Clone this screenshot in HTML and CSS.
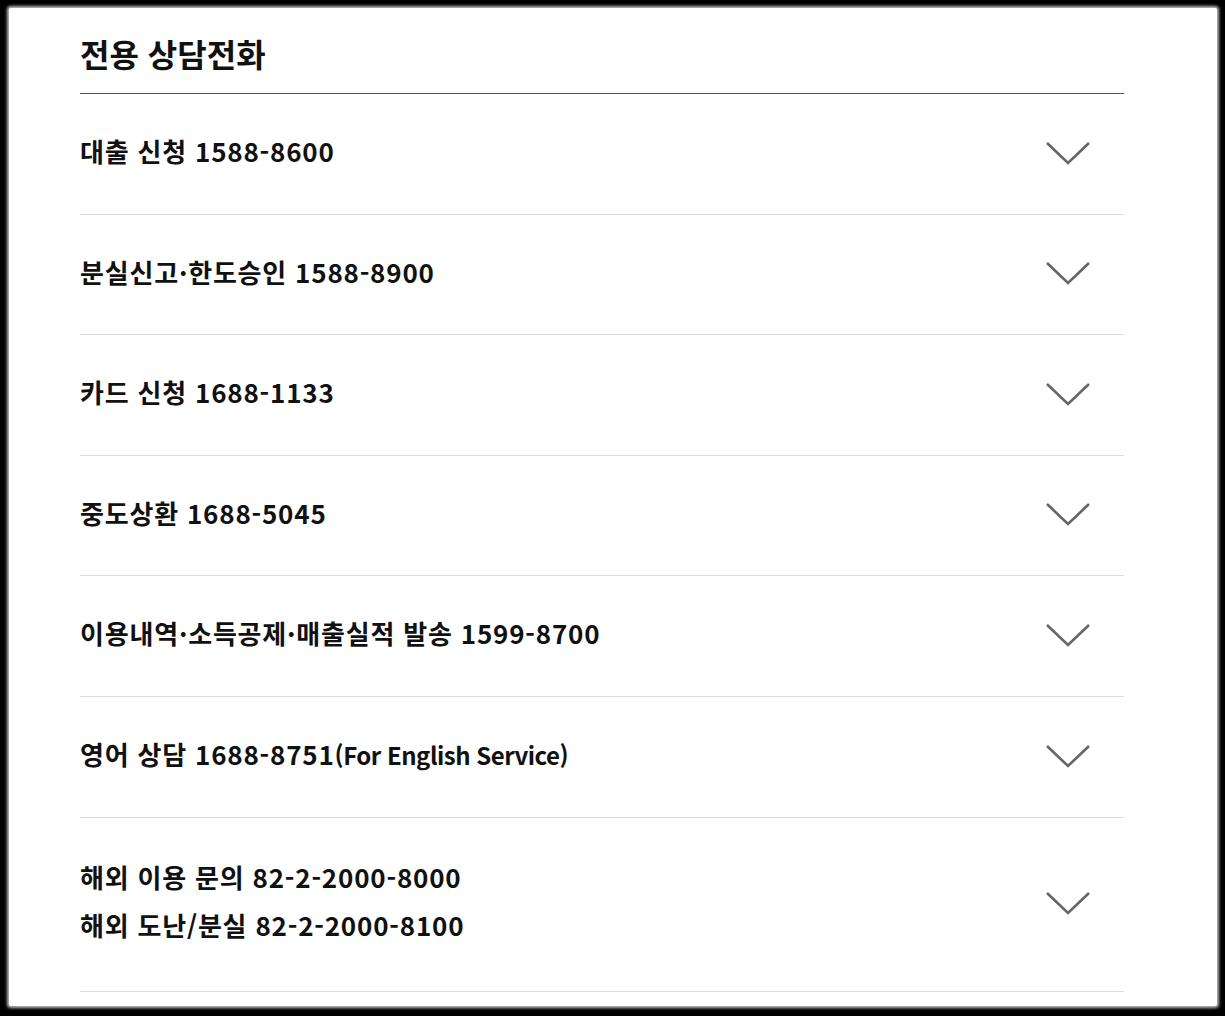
FILE: index.html
```html
<!DOCTYPE html>
<html lang="ko">
<head>
<meta charset="utf-8">
<title>전용 상담전화</title>
<link rel="stylesheet" href="styles.css">
</head>
<body>
<div class="panel">
  <section class="contact">
    <h2 class="title">전용 상담전화</h2>
    <ul class="list">
      <li class="row"><div class="label"><p>대출 신청 1588-8600</p></div><svg class="chev" viewBox="0 0 46 26"><path d="M2 2 L23 22 L44 2"/></svg></li>
      <li class="row"><div class="label"><p>분실신고·한도승인 1588-8900</p></div><svg class="chev" viewBox="0 0 46 26"><path d="M2 2 L23 22 L44 2"/></svg></li>
      <li class="row"><div class="label"><p>카드 신청 1688-1133</p></div><svg class="chev" viewBox="0 0 46 26"><path d="M2 2 L23 22 L44 2"/></svg></li>
      <li class="row"><div class="label"><p>중도상환 1688-5045</p></div><svg class="chev" viewBox="0 0 46 26"><path d="M2 2 L23 22 L44 2"/></svg></li>
      <li class="row"><div class="label"><p>이용내역·소득공제·매출실적 발송 1599-8700</p></div><svg class="chev" viewBox="0 0 46 26"><path d="M2 2 L23 22 L44 2"/></svg></li>
      <li class="row"><div class="label"><p>영어 상담 1688-8751<span class="en">(For English Service)</span></p></div><svg class="chev" viewBox="0 0 46 26"><path d="M2 2 L23 22 L44 2"/></svg></li>
      <li class="row row-last"><div class="label"><p>해외 이용 문의 82-2-2000-8000</p><p>해외 도난/분실 82-2-2000-8100</p></div><svg class="chev" viewBox="0 0 46 26"><path d="M2 2 L23 22 L44 2"/></svg></li>
    </ul>
  </section>
</div>
</body>
</html>
```
FILE: styles.css
```css
html, body {
  margin: 0;
  padding: 0;
  background: #000;
}
body {
  width: 1225px;
  height: 1016px;
  overflow: hidden;
  font-family: "Noto Sans CJK KR", "Noto Sans", sans-serif;
  color: #111;
}
.panel {
  margin: 8px 8px 0 9px;
  height: 998px;
  background: #fff;
  box-shadow: 0 0 3px 2px #bbb;
  border-radius: 2px;
}
.contact {
  margin-left: 71px;
  width: 1044px;
  padding-top: 22px;
}
.title {
  margin: 0;
  font-size: 32px;
  font-weight: 700;
  line-height: 46px;
  padding-bottom: 17px;
  border-bottom: 1px solid #555;
  letter-spacing: 0;
}
.list {
  list-style: none;
  margin: 0;
  padding: 0;
}
.row {
  display: flex;
  align-items: center;
  justify-content: space-between;
  padding: 36px 0;
  border-bottom: 1px solid #ddd;
}
.row-last {
  padding: 38px 0 39px;
}
.label {
  margin: -3px 0 3px;
}
.label p {
  margin: 0;
  font-size: 26px;
  font-weight: 700;
  line-height: 47.5px;
  letter-spacing: 0.8px;
}
.label .en {
  font-size: 24px;
  letter-spacing: -0.5px;
}
.row-last .label p {
  line-height: 48px;
}
.chev {
  width: 46px;
  height: 26px;
  margin-right: 33px;
  flex: none;
}
.chev path {
  fill: none;
  stroke: #666;
  stroke-width: 2.6;
}
```
